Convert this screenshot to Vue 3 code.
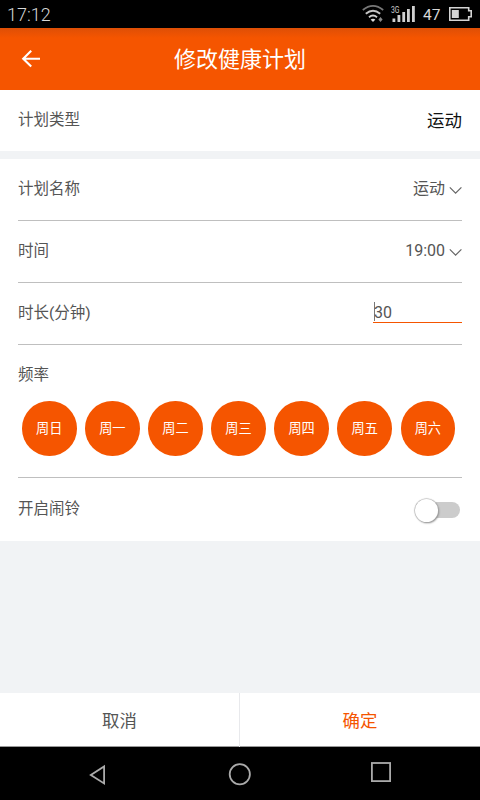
<script setup>
import { ref } from 'vue'

const rows = [
  { label: '计划名称', value: '运动' },
  { label: '时间', value: '19:00' },
]
const days = ['周日', '周一', '周二', '周三', '周四', '周五', '周六']
const duration = ref('30')
</script>

<template>
  <div class="screen">
    <div class="status">
      <span class="clock">17:12</span>
      <svg class="status-icons" width="54" height="28" viewBox="0 0 54 28">
        <g fill="none" stroke-linecap="butt">
          <path d="M0.8 10Q11 1.8 21.2 10" stroke="#777" stroke-width="1.8" />
          <path d="M3.8 13.7Q11 7.8 18.2 13.7" stroke="#c4c4c4" stroke-width="1.9" />
          <path d="M7 17.2Q11 13.8 15 17.2" stroke="#d0d0d0" stroke-width="1.9" />
        </g>
        <path d="M8.6 19.6Q11 17.8 13.4 19.6L11 22Z" fill="#ddd" />
        <path d="M18.5 17L20.6 19.5L18.5 22L16.4 19.5Z" fill="#888" />
        <g fill="#d0d0d0">
          <rect x="30.5" y="18.5" width="2.8" height="3.5" />
          <rect x="35.5" y="15" width="2.8" height="7" />
          <rect x="40.3" y="12" width="2.8" height="10" />
          <rect x="45" y="9" width="2.8" height="13" />
          <rect x="50" y="6" width="2.8" height="16" />
        </g>
        <text class="network" x="29" y="13" textLength="8.5" lengthAdjust="spacingAndGlyphs">3G</text>
      </svg>
      <span class="percent">47</span>
      <svg class="battery" width="25" height="28" viewBox="0 0 25 28">
        <path d="M1.8 7.8H20.7V10.7H23.2V16.7H20.7V20.2H1.8Z" fill="none" stroke="#d4d4d4" stroke-width="1.6" />
        <rect x="3.8" y="10" width="7" height="8" fill="#d4d4d4" />
      </svg>
    </div>

    <header class="header">
      <svg class="back" width="20" height="20" viewBox="0 0 20 20">
        <path d="M10.2 1.8L2.2 9.7L10.2 17.6M2.4 9.7H19" fill="none" stroke="#fff" stroke-width="2.1" />
      </svg>
      <h1>修改健康计划</h1>
    </header>

    <section class="type">
      <span class="label">计划类型</span>
      <span class="type-value">运动</span>
    </section>

    <section class="form">
      <div v-for="row in rows" :key="row.label" class="row">
        <span class="label">{{ row.label }}</span>
        <span class="value">{{ row.value }}</span>
        <svg class="chevron" width="13" height="9" viewBox="0 0 13 9">
          <path d="M0.8 1.4L6.6 7.1L12.4 1.4" fill="none" stroke="#666" stroke-width="1.2" />
        </svg>
      </div>
      <div class="row">
        <span class="label">时长(分钟)</span>
        <div class="field"><i class="caret"></i>{{ duration }}</div>
      </div>
      <div class="frequency">
        <span class="label">频率</span>
        <div class="days">
          <span v-for="day in days" :key="day" class="day">{{ day }}</span>
        </div>
      </div>
      <div class="alarm">
        <span class="label">开启闹铃</span>
        <span class="switch"><i class="knob"></i></span>
      </div>
    </section>

    <footer class="actions">
      <span class="action">取消</span>
      <span class="action confirm">确定</span>
    </footer>

    <nav class="nav">
      <svg width="480" height="54" viewBox="0 0 480 54">
        <g fill="none" stroke="#aaa" stroke-width="1.8">
          <path d="M104.1 19.4V36.4L90.8 27.9Z" />
          <circle cx="239.8" cy="27.2" r="10.1" />
          <rect x="371.9" y="16" width="18.2" height="18.1" />
        </g>
      </svg>
    </nav>
  </div>
</template>

<style>
body {
  margin: 0;
}
</style>

<style scoped>
.screen {
  display: flex;
  flex-direction: column;
  width: 480px;
  height: 800px;
  overflow: hidden;
  background: #f1f3f5;
  color: #555;
  font-family: Roboto, "Noto Sans CJK SC", sans-serif;
  font-size: 15.5px;
  line-height: 24px;
}
.screen * {
  box-sizing: border-box;
}
svg {
  display: block;
  flex: none;
}
.status {
  display: flex;
  flex: none;
  height: 28px;
  padding: 0 7px 0 7px;
  background: #000;
  color: #d8d8d8;
  line-height: 29px;
}
.clock {
  flex: 1;
  font-size: 18px;
  font-weight: 300;
}
.network {
  fill: #ccc;
  font-size: 8.5px;
}
.percent {
  width: 25px;
  margin-left: 7px;
  font-size: 15.5px;
  line-height: 30px;
}
.header {
  display: grid;
  flex: none;
  grid-template-columns: 60px 1fr 60px;
  align-items: center;
  height: 62px;
  background: linear-gradient(#de4f06, #f55500 10px);
  color: #fff;
}
.back {
  margin-left: 21px;
}
h1 {
  margin: 0;
  padding-top: 2px;
  font-size: 22px;
  font-weight: 400;
  line-height: 32px;
  text-align: center;
}
.type {
  display: flex;
  flex: none;
  justify-content: space-between;
  height: 61px;
  padding: 18px 18px 0;
  background: #fff;
}
.type-value {
  padding-top: 1px;
  color: #111;
  font-size: 17.5px;
}
.form {
  flex: none;
  height: 382px;
  margin-top: 8px;
  padding: 0 18px;
  background: #fff;
}
.row {
  display: flex;
  align-items: flex-start;
  height: 62px;
  padding-top: 18px;
  border-bottom: 1px solid #bfbfbf;
}
.label {
  flex: 1;
}
.value {
  font-size: 16px;
}
.chevron {
  margin: 9px 0 0 4px;
}
.field {
  display: flex;
  align-items: center;
  width: 89px;
  height: 22px;
  padding-top: 2px;
  border-bottom: 1px solid #f55500;
  font-size: 16px;
}
.caret {
  width: 1px;
  height: 19px;
  margin: -2px 0 0 1px;
  margin-right: -1px;
  background: #777;
}
.frequency {
  height: 133px;
  padding-top: 18px;
  border-bottom: 1px solid #bfbfbf;
}
.frequency .label {
  display: block;
}
.days {
  display: flex;
  gap: 8.6px;
  padding: 14.4px 0 0 4px;
}
.day {
  flex: none;
  width: 54.5px;
  height: 54.5px;
  border-radius: 50%;
  background: #f55500;
  color: #fff;
  font-size: 13.2px;
  line-height: 56px;
  text-align: center;
}
.alarm {
  display: flex;
  padding-top: 19px;
}
.switch {
  display: flex;
  align-items: center;
  width: 43px;
  height: 16px;
  margin: 5px 2px 0 0;
  border-radius: 8px;
  background: #ccc;
}
.knob {
  width: 23px;
  height: 23px;
  margin-left: -2px;
  border-radius: 50%;
  background: #fff;
  box-shadow: 0 0 1px 0.6px #aaa, 1px 1px 2px #888;
}
.actions {
  display: grid;
  flex: none;
  grid-template-columns: 239px 241px;
  height: 54px;
  margin-top: auto;
  border-bottom: 1px solid #999;
  background: #fff;
  font-size: 17.4px;
  line-height: 56px;
  text-align: center;
}
.confirm {
  border-left: 1px solid #e8e9ec;
  color: #f55500;
}
.nav {
  flex: none;
  height: 53px;
  background: #000;
}
</style>
